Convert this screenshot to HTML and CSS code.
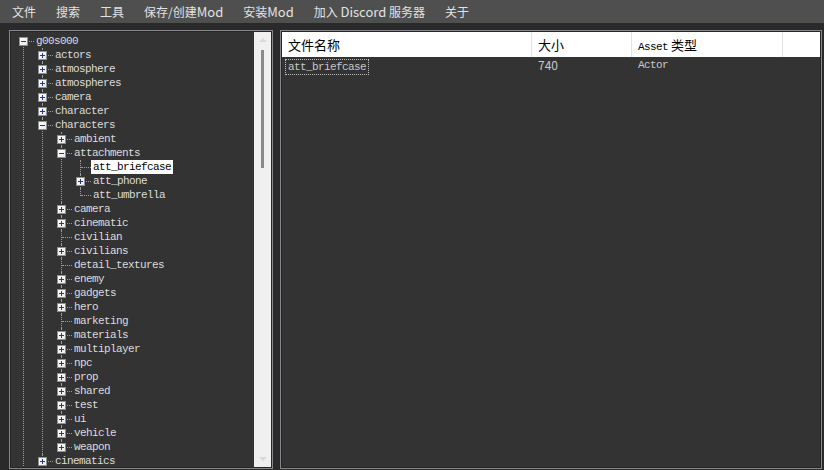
FILE: index.html
```html
<!DOCTYPE html>
<html lang="zh-CN">
<head>
    <meta charset="UTF-8">
    <title>Mod 工具</title>
    <link rel="stylesheet" href="styles.css">
</head>
<body>
    <div class="menubar">
        <span class="menu-item">文件</span>
        <span class="menu-item">搜索</span>
        <span class="menu-item">工具</span>
        <span class="menu-item">保存/创建<span class="latin">Mod</span></span>
        <span class="menu-item">安装<span class="latin">Mod</span></span>
        <span class="menu-item">加入 <span class="latin">Discord</span> 服务器</span>
        <span class="menu-item">关于</span>
    </div>

    <div class="main">
        <div class="panel tree-panel">
            <div class="tree-view">
                <ul class="tree root">
                    <li>
                        <div class="node"><span class="toggle"><i class="box minus"></i></span><span class="label">g00s000</span></div>
                        <ul class="tree">
                            <li><div class="node"><span class="toggle"><i class="box plus"></i></span><span class="label">actors</span></div></li>
                            <li><div class="node"><span class="toggle"><i class="box plus"></i></span><span class="label">atmosphere</span></div></li>
                            <li><div class="node"><span class="toggle"><i class="box plus"></i></span><span class="label">atmospheres</span></div></li>
                            <li><div class="node"><span class="toggle"><i class="box plus"></i></span><span class="label">camera</span></div></li>
                            <li><div class="node"><span class="toggle"><i class="box plus"></i></span><span class="label">character</span></div></li>
                            <li>
                                <div class="node"><span class="toggle"><i class="box minus"></i></span><span class="label">characters</span></div>
                                <ul class="tree">
                                    <li><div class="node"><span class="toggle"><i class="box plus"></i></span><span class="label">ambient</span></div></li>
                                    <li>
                                        <div class="node"><span class="toggle"><i class="box minus"></i></span><span class="label">attachments</span></div>
                                        <ul class="tree">
                                            <li><div class="node"><span class="toggle"></span><span class="label selected">att_briefcase</span></div></li>
                                            <li><div class="node"><span class="toggle"><i class="box plus"></i></span><span class="label">att_phone</span></div></li>
                                            <li><div class="node"><span class="toggle"></span><span class="label">att_umbrella</span></div></li>
                                        </ul>
                                    </li>
                                    <li><div class="node"><span class="toggle"><i class="box plus"></i></span><span class="label">camera</span></div></li>
                                    <li><div class="node"><span class="toggle"><i class="box plus"></i></span><span class="label">cinematic</span></div></li>
                                    <li><div class="node"><span class="toggle"></span><span class="label">civilian</span></div></li>
                                    <li><div class="node"><span class="toggle"><i class="box plus"></i></span><span class="label">civilians</span></div></li>
                                    <li><div class="node"><span class="toggle"></span><span class="label">detail_textures</span></div></li>
                                    <li><div class="node"><span class="toggle"><i class="box plus"></i></span><span class="label">enemy</span></div></li>
                                    <li><div class="node"><span class="toggle"><i class="box plus"></i></span><span class="label">gadgets</span></div></li>
                                    <li><div class="node"><span class="toggle"><i class="box plus"></i></span><span class="label">hero</span></div></li>
                                    <li><div class="node"><span class="toggle"></span><span class="label">marketing</span></div></li>
                                    <li><div class="node"><span class="toggle"><i class="box plus"></i></span><span class="label">materials</span></div></li>
                                    <li><div class="node"><span class="toggle"><i class="box plus"></i></span><span class="label">multiplayer</span></div></li>
                                    <li><div class="node"><span class="toggle"><i class="box plus"></i></span><span class="label">npc</span></div></li>
                                    <li><div class="node"><span class="toggle"><i class="box plus"></i></span><span class="label">prop</span></div></li>
                                    <li><div class="node"><span class="toggle"><i class="box plus"></i></span><span class="label">shared</span></div></li>
                                    <li><div class="node"><span class="toggle"><i class="box plus"></i></span><span class="label">test</span></div></li>
                                    <li><div class="node"><span class="toggle"><i class="box plus"></i></span><span class="label">ui</span></div></li>
                                    <li><div class="node"><span class="toggle"><i class="box plus"></i></span><span class="label">vehicle</span></div></li>
                                    <li><div class="node"><span class="toggle"><i class="box plus"></i></span><span class="label">weapon</span></div></li>
                                </ul>
                            </li>
                            <li class="more"><div class="node"><span class="toggle"><i class="box plus"></i></span><span class="label">cinematics</span></div></li>
                        </ul>
                    </li>
                </ul>
            </div>
            <div class="scrollbar">
                <span class="arrow up"></span>
                <div class="track"><div class="thumb"></div></div>
                <span class="arrow down"></span>
            </div>
        </div>

        <div class="panel list-panel">
            <div class="list-header">
                <div class="col col-name">文件名称</div>
                <div class="col col-size">大小</div>
                <div class="col col-type"><span class="mono">Asset</span> 类型</div>
                <div class="col col-fill"></div>
            </div>
            <div class="list-row">
                <div class="col col-name"><span class="focus mono">att_briefcase</span></div>
                <div class="col col-size">740</div>
                <div class="col col-type mono">Actor</div>
            </div>
        </div>
    </div>
</body>
</html>
```

FILE: styles.css
```css
* {
    box-sizing: border-box;
    margin: 0;
    padding: 0;
}

body {
    background-color: #2a2a2a;
    font-family: "Noto Sans CJK SC", "Noto Sans", sans-serif;
    width: 824px;
    height: 470px;
    overflow: hidden;
}

.menubar {
    display: flex;
    height: 23px;
    align-items: center;
    padding-left: 2px;
    background: #4f4f4f;
    color: #e2e2e2;
    font-size: 12px;
}

.menu-item {
    padding: 0 10px;
    line-height: 23px;
}

.latin {
    font-size: 13px;
}

.main {
    display: flex;
    gap: 7px;
    padding: 7px 2px 0 9px;
}

.panel {
    height: 439px;
    border: 1px solid #86868c;
    padding: 1px;
    background: #262626;
}

/* tree */
.tree-panel {
    width: 264px;
    display: flex;
}

.tree-view {
    flex: 1;
    background: #333333;
    overflow: hidden;
    padding: 2px 0 0 3px;
    font-family: "Liberation Mono", "DejaVu Sans Mono", monospace;
    font-size: 11px;
    letter-spacing: -0.6px;
    color: #dcdcdc;
}

.tree {
    list-style: none;
}

.tree .tree {
    margin-left: 19px;
}

.tree li {
    position: relative;
}

.tree li::before {
    content: "";
    position: absolute;
    left: 9px;
    top: 0;
    bottom: 0;
    border-left: 1px dotted #9c9c9c;
}

.tree li:last-child::before {
    bottom: auto;
    height: 8px;
}

.root > li::before,
.root > li:last-child::before {
    top: 8px;
    bottom: 0;
    height: auto;
}

.tree li.more::before {
    bottom: 0;
    height: auto;
}

.node {
    position: relative;
    display: flex;
    height: 14px;
}

.node::after {
    content: "";
    position: absolute;
    left: 10px;
    top: 7px;
    width: 10px;
    border-top: 1px dotted #9c9c9c;
}

.toggle {
    flex: none;
    width: 22px;
    padding: 3px 0 0 5px;
}

.box {
    display: block;
    position: relative;
    z-index: 1;
    width: 9px;
    height: 9px;
    border: 1px solid #8e8f92;
    background: linear-gradient(135deg, #ffffff 0%, #e8e8e8 100%);
}

.box::before {
    content: "";
    position: absolute;
    left: 1px;
    top: 3px;
    width: 5px;
    height: 1px;
    background: #233a8c;
}

.box.plus::after {
    content: "";
    position: absolute;
    left: 3px;
    top: 1px;
    width: 1px;
    height: 5px;
    background: #233a8c;
}

.label {
    position: relative;
    z-index: 1;
    line-height: 14px;
    padding: 0 2px;
    margin-left: -2px;
    white-space: nowrap;
}

.label.selected {
    background: #ffffff;
    color: #000000;
}

.scrollbar {
    flex: none;
    width: 17px;
    display: flex;
    flex-direction: column;
    align-items: center;
    background: #f0f0f0;
}

.arrow {
    width: 0;
    height: 0;
    border-left: 4px solid transparent;
    border-right: 4px solid transparent;
    margin: 6px 0;
}

.arrow.up {
    border-bottom: 4px solid #dadada;
}

.arrow.down {
    border-top: 4px solid #dadada;
}

.track {
    flex: 1;
    width: 3px;
    padding-top: 2px;
}

.thumb {
    width: 3px;
    height: 118px;
    background: #8a8a8a;
}

/* file list */
.list-panel {
    width: 542px;
    background: #333333;
    box-shadow: inset 0 0 0 1px #262626;
}

.list-header {
    display: flex;
    height: 25px;
    background: #ffffff;
    color: #000000;
    font-size: 13px;
}

.list-header .col {
    line-height: 25px;
    border-right: 1px solid #e3e3e3;
}

.list-header .col-fill {
    flex: 1;
    border-right: none;
}

.col {
    flex: none;
    padding-left: 6px;
    white-space: nowrap;
}

.col-name {
    width: 250px;
}

.col-size {
    width: 100px;
}

.col-type {
    width: 151px;
}

.mono {
    font-family: "Liberation Mono", "DejaVu Sans Mono", monospace;
    font-size: 11px;
    letter-spacing: -0.6px;
}

.list-row {
    display: flex;
    height: 16px;
    line-height: 16px;
    color: #c8c8c8;
    font-size: 12px;
}

.focus {
    display: inline-block;
    height: 16px;
    line-height: 14px;
    border: 1px dotted #c0c0c0;
    padding: 0 2px;
    margin-left: -3px;
}
```
